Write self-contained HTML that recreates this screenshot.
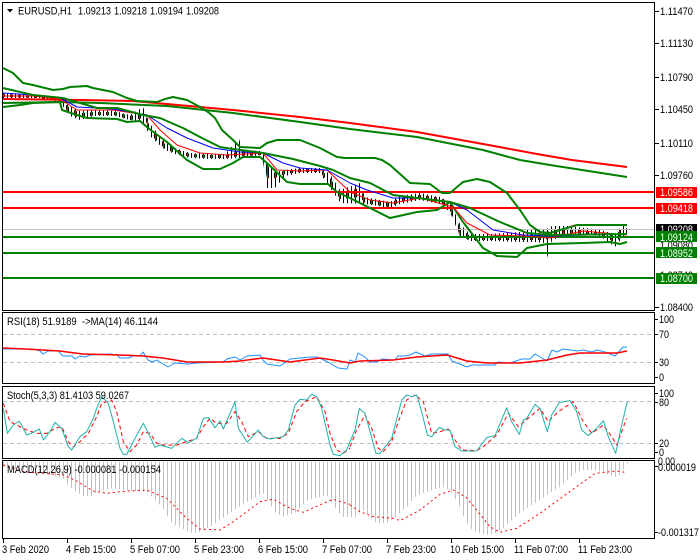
<!DOCTYPE html>
<html><head><meta charset="utf-8"><title>EURUSD,H1</title>
<style>
html,body{margin:0;padding:0;background:#fff}
svg{display:block}
text{font:11px "Liberation Sans",sans-serif;fill:#000}
.w{fill:#fff}
polyline{fill:none;stroke-linejoin:round}
.z polyline{vector-effect:non-scaling-stroke}
</style></head><body>
<svg width="700" height="560" viewBox="0 0 700 560" xmlns="http://www.w3.org/2000/svg">
<defs>
<pattern id="bar" width="4" height="600" patternUnits="userSpaceOnUse"><rect x="3" width="1" height="600" fill="#c0c0c0"/></pattern>
<pattern id="wick" width="4" height="600" patternUnits="userSpaceOnUse"><rect x="3" width="1" height="600" fill="#000"/></pattern>
<pattern id="body" width="8" height="600" patternUnits="userSpaceOnUse"><rect x="2" width="3" height="600" fill="#000"/><rect x="3" width="1" height="600" fill="#f00"/></pattern>
</defs>
<rect width="700" height="560" fill="#fff"/>

<!-- candles -->
<polygon fill="url(#wick)" points="3,93 40,95 60,100 70,106 80,111 95,110 115,111 130,115 143,107 150,124 165,142 175,148 190,153 210,154 225,154 239,139 243,150 262,151 267,162 275,172 285,170 300,168 320,168 330,174 340,190 360,183 365,197 390,202 400,196 420,193 440,197 450,202 460,224 470,234 490,234 520,232 535,228 545,230 552,226 570,226 600,230 615,234 622,226 627,226 627,236 622,238 615,247 600,236 570,234 552,240 547,258 545,243 535,242 520,242 490,241 470,241 460,236 450,212 440,204 420,200 400,204 390,208 365,204 343,203 340,202 330,188 320,173 300,173 285,176 275,188 267,188 262,155 240,158 225,159 210,159 190,158 175,154 165,150 150,136 143,122 130,120 115,116 95,116 80,120 70,116 60,102 40,98 3,98"/>
<polygon fill="url(#body)" points="3,94 40,96 60,100 70,108 80,113 95,112 115,112 130,116 145,113 150,128 165,144 175,149 190,154 210,155 225,155 240,151 262,152 267,165 275,173 285,171 300,169 320,169 330,178 340,193 360,188 365,199 390,203 400,198 420,195 440,198 450,203 460,228 470,236 490,236 520,236 535,234 545,234 552,229 570,229 600,232 615,236 622,228 627,228 627,233 622,237 615,242 600,235 570,233 552,236 545,240 535,240 520,240 490,240 470,240 460,236 450,210 440,202 420,199 400,202 390,207 365,203 360,197 340,199 330,184 320,172 300,172 285,174 275,178 267,178 262,155 240,156 225,158 210,158 190,157 175,153 165,149 150,134 145,118 130,120 115,115 95,115 80,118 70,114 60,102 40,98 3,97"/>

<!-- horizontal levels -->
<rect x="3" y="229" width="651" height="1" fill="#c0c0c0"/>
<rect x="3" y="191" width="651" height="2" fill="#f00"/>
<rect x="3" y="207" width="651" height="2" fill="#f00"/>
<rect x="3" y="236" width="651" height="2" fill="#008000"/>
<rect x="3" y="252" width="651" height="2" fill="#008000"/>
<rect x="3" y="277" width="651" height="2" fill="#008000"/>

<!-- moving averages and bands -->
<polyline stroke="#008000" stroke-width="2" points="3,103 60,102 100,103 167,106 233,113 300,122 350,129 417,137 483,150 520,160 550,165 627,177"/>
<polyline stroke="#f00" stroke-width="2" points="3,99 83,100 133,101 167,104 233,110 300,117 350,123 417,132 483,144 537,154 572,160 627,167"/>
<polyline stroke="#008000" stroke-width="2" points="3,68 13,73 23,83 33,85 53,90 63,89 70,87 87,86 93,88 113,92 127,98 137,101 157,102 165,99 173,97 187,100 200,107 208,112 215,118 222,130 233,140 240,147 260,148 267,143 277,140 300,140 320,148 337,157 345,158 375,158 382,160 390,165 410,183 430,184 442,193 450,193 463,182 477,179 490,182 507,193 520,210 530,225 540,232 550,233 567,228 577,225 627,225"/>
<polyline stroke="#008000" stroke-width="2" points="3,107 20,105 33,103 60,102 62,110 77,115 87,118 117,119 127,122 140,121 148,128 167,142 187,160 203,169 220,169 233,163 243,157 260,157 267,163 287,182 300,184 328,184 337,192 350,198 390,218 417,212 437,210 450,202 463,222 483,248 497,256 517,257 527,248 547,244 583,243 610,242 620,244 627,242"/>
<polyline stroke="#f00" stroke-width="1" points="3,96 33,96 60,99 77,110 113,110 147,115 160,130 177,145 200,153 227,155 263,153 277,170 300,171 327,170 350,192 370,200 393,203 420,198 453,207 467,223 490,235 523,236 550,238 583,231 627,235"/>
<polyline stroke="#00f" stroke-width="1" points="3,93 33,95 60,98 77,107 113,109 147,115 167,128 187,138 213,148 240,152 263,153 283,163 300,168 327,170 350,183 367,190 393,198 420,198 450,202 467,210 493,230 523,235 550,236 627,234"/>
<polyline stroke="#008000" stroke-width="2" points="3,88 33,95 63,98 97,108 117,108 143,115 160,118 183,128 200,137 220,147 233,149 263,153 293,159 320,166 333,170 350,178 370,183 393,195 417,198 450,202 470,208 500,222 527,233 550,235 627,234"/>

<!-- RSI -->
<line x1="3" x2="654" y1="334.5" y2="334.5" stroke="#c0c0c0" stroke-dasharray="4 3"/>
<line x1="3" x2="654" y1="362.5" y2="362.5" stroke="#c0c0c0" stroke-dasharray="4 3"/>
<polyline stroke="#1e90ff" points="3,349 33,349 40,351 43,354 48,351 58,351 63,356 72,356 75,359 80,356 85,357 90,355 110,354 117,355 120,358 128,358 133,356 140,356 143,352 148,360 152,362 157,360 163,364 168,367 175,363 187,364 197,363 223,362 227,359 235,357 240,360 247,356 260,355 263,360 267,364 280,366 290,359 300,358 310,357 317,357 328,362 338,368 347,369 350,360 355,362 358,353 365,357 370,362 377,362 382,359 395,360 398,356 405,356 410,355 416,352 425,356 432,354 448,354 452,361 467,367 472,365 495,365 498,362 510,363 522,359 530,359 535,354 547,361 552,350 557,352 563,349 577,351 583,350 592,352 597,350 605,352 615,356 623,347 627,347"/>
<polyline stroke="#f00" stroke-width="1.5" points="3,348 25,349 60,351 67,352 83,354 120,355 143,356 163,358 187,362 223,362 240,361 263,358 290,362 320,358 333,360 350,363 360,361 393,360 417,357 447,355 467,361 487,363 520,363 547,360 567,355 580,353 610,353 617,353 627,351"/>

<!-- Stochastic -->
<line x1="3" x2="654" y1="401.5" y2="401.5" stroke="#c0c0c0" stroke-dasharray="4 3"/>
<line x1="3" x2="654" y1="443.5" y2="443.5" stroke="#c0c0c0" stroke-dasharray="4 3"/>
<g class="z" transform="translate(0,305) scale(.33333)">
<polyline stroke="#f00" stroke-dasharray="4 3" points="10,295 30,350 50,360 80,375 110,385 140,385 165,370 185,365 205,410 220,425 240,410 265,385 290,335 305,295 335,285 350,320 370,410 390,440 410,420 430,380 450,385 470,415 490,420 530,420 560,410 590,400 610,365 630,340 650,355 680,355 705,320 725,350 745,395 775,380 800,400 840,400 865,385 890,320 915,290 950,275 975,320 990,385 1010,435 1030,445 1050,430"/>
<polyline stroke="#20b2aa" points="10,310 22,385 40,360 58,348 80,390 100,382 118,372 130,405 150,380 165,352 185,370 205,425 215,435 240,395 260,380 280,340 290,310 305,275 325,295 340,350 360,430 370,448 380,448 405,400 430,355 450,395 465,427 480,420 515,430 545,400 565,413 590,400 610,340 625,338 645,368 660,348 670,372 705,290 715,370 742,412 775,375 790,395 810,402 850,395 865,375 885,300 900,283 920,285 935,268 950,275 965,310 990,420 1000,448 1020,452 1040,435 1050,410"/>
</g>
<g class="z" transform="translate(350,305) scale(.33333)">
<polyline stroke="#f00" stroke-dasharray="4 3" points="0,425 20,375 45,330 65,370 85,430 100,440 125,410 145,350 170,285 195,270 220,290 245,385 270,380 295,372 315,405 335,435 380,437 400,425 440,390 475,325 505,365 540,335 570,310 595,350 625,320 670,290 700,350 725,385 760,360 785,395 800,420 830,340"/>
<polyline stroke="#20b2aa" points="0,410 15,375 28,310 45,325 60,380 78,445 90,445 125,400 155,285 170,270 185,275 200,270 215,320 232,390 245,395 268,367 285,375 300,375 315,425 335,438 380,438 410,398 435,392 470,308 485,350 508,388 520,345 530,340 555,298 570,310 592,380 605,330 628,292 660,287 680,320 695,375 715,392 740,370 760,347 775,395 797,445 815,360 832,290"/>
</g>

<!-- MACD -->
<polygon fill="url(#bar)" points="3,467 43,473 63,478 68,485 75,491 83,496 92,496 97,492 113,488 123,490 147,492 155,500 163,508 168,517 173,524 183,529 192,533 200,532 213,525 230,513 247,502 263,493 275,512 283,517 295,513 308,500 327,495 338,512 343,517 350,517 355,518 360,512 363,510 375,522 380,523 387,523 395,518 403,510 407,507 415,497 423,493 432,490 445,487 452,493 460,507 463,515 467,523 472,530 479,533 487,535 497,533 503,528 512,520 520,513 532,505 540,500 550,493 560,487 567,480 575,473 583,470 595,470 615,477 620,475 625,467 628,463 628,462 3,462"/>
<g class="z" transform="translate(0,455) scale(.33333)">
<polyline stroke="#f00" stroke-dasharray="2 3" points="10,30 70,50 190,60 230,78 280,108 320,115 380,108 440,105 500,130 560,190 600,222 660,225 700,200 780,140 820,133 870,160 910,172 970,145 1000,133 1050,148"/>
</g>
<g class="z" transform="translate(350,455) scale(.33333)">
<polyline stroke="#f00" stroke-dasharray="2 3" points="0,150 30,170 70,185 130,190 150,197 210,165 270,118 310,105 350,128 420,215 450,232 500,220 570,175 680,95 735,55 800,48 825,52"/>
</g>

<!-- frames -->
<g fill="none" stroke="#000">
<rect x="2.5" y="2.5" width="652" height="308"/>
<rect x="2.5" y="312.5" width="652" height="71"/>
<rect x="2.5" y="386.5" width="652" height="72"/>
<rect x="2.5" y="460.5" width="652" height="78"/>
<path d="M654 11.5h5M654 43.5h5M654 77.5h5M654 109.5h5M654 143.5h5M654 175.5h5M654 307.5h5M654 319.5h4M654 334.5h4M654 362.5h4M654 377.5h4M654 393.5h4M654 402.5h4M654 443.5h4M654 452.5h4M654 466.5h4M654 532.5h4"/>
<path d="M3.5 539v4M67.5 539v4M131.5 539v4M195.5 539v4M259.5 539v4M323.5 539v4M387.5 539v4M451.5 539v4M515.5 539v4M579.5 539v4"/>
</g>

<!-- right axis -->
<g>
<text x="660" y="15" textLength="33" lengthAdjust="spacingAndGlyphs">1.11470</text>
<text x="660" y="47" textLength="33" lengthAdjust="spacingAndGlyphs">1.11130</text>
<text x="660" y="81" textLength="33" lengthAdjust="spacingAndGlyphs">1.10790</text>
<text x="660" y="113" textLength="33" lengthAdjust="spacingAndGlyphs">1.10450</text>
<text x="660" y="147" textLength="33" lengthAdjust="spacingAndGlyphs">1.10110</text>
<text x="660" y="179" textLength="33" lengthAdjust="spacingAndGlyphs">1.09760</text>
<text x="660" y="249" textLength="33" lengthAdjust="spacingAndGlyphs">1.09080</text>
<text x="660" y="279" textLength="33" lengthAdjust="spacingAndGlyphs">1.08740</text>
<text x="660" y="311" textLength="33" lengthAdjust="spacingAndGlyphs">1.08400</text>
</g>
<rect x="656" y="187" width="41" height="11" fill="#f00"/>
<rect x="656" y="203" width="41" height="11" fill="#f00"/>
<rect x="656" y="224" width="41" height="11" fill="#000"/>
<text class="w" x="660" y="233" textLength="33" lengthAdjust="spacingAndGlyphs">1.09208</text>
<rect x="656" y="231" width="41" height="11" fill="#008000"/>
<rect x="656" y="247" width="41" height="11" fill="#008000"/>
<rect x="656" y="273" width="41" height="11" fill="#008000"/>
<text class="w" x="660" y="196" textLength="33" lengthAdjust="spacingAndGlyphs">1.09586</text>
<text class="w" x="660" y="212" textLength="33" lengthAdjust="spacingAndGlyphs">1.09418</text>
<text class="w" x="660" y="241" textLength="33" lengthAdjust="spacingAndGlyphs">1.09124</text>
<text class="w" x="660" y="257" textLength="33" lengthAdjust="spacingAndGlyphs">1.08952</text>
<text class="w" x="660" y="282" textLength="33" lengthAdjust="spacingAndGlyphs">1.08700</text>

<text x="659" y="323" textLength="15" lengthAdjust="spacingAndGlyphs">100</text>
<text x="659" y="338" textLength="10" lengthAdjust="spacingAndGlyphs">70</text>
<text x="659" y="366" textLength="10" lengthAdjust="spacingAndGlyphs">30</text>
<text x="659" y="381" textLength="5" lengthAdjust="spacingAndGlyphs">0</text>
<text x="659" y="397" textLength="15" lengthAdjust="spacingAndGlyphs">100</text>
<text x="659" y="406" textLength="10" lengthAdjust="spacingAndGlyphs">80</text>
<text x="659" y="447" textLength="10" lengthAdjust="spacingAndGlyphs">20</text>
<text x="659" y="456" textLength="5" lengthAdjust="spacingAndGlyphs">0</text>
<text x="658" y="465" textLength="17" lengthAdjust="spacingAndGlyphs">0.00</text>
<text x="658" y="471" textLength="38" lengthAdjust="spacingAndGlyphs">0.000019</text>
<text x="658" y="536" textLength="41" lengthAdjust="spacingAndGlyphs">-0.001317</text>

<!-- bottom axis -->
<text x="2" y="553" textLength="47" lengthAdjust="spacingAndGlyphs">3 Feb 2020</text>
<text x="66" y="553" textLength="50" lengthAdjust="spacingAndGlyphs">4 Feb 15:00</text>
<text x="130" y="553" textLength="50" lengthAdjust="spacingAndGlyphs">5 Feb 07:00</text>
<text x="194" y="553" textLength="50" lengthAdjust="spacingAndGlyphs">5 Feb 23:00</text>
<text x="258" y="553" textLength="50" lengthAdjust="spacingAndGlyphs">6 Feb 15:00</text>
<text x="322" y="553" textLength="50" lengthAdjust="spacingAndGlyphs">7 Feb 07:00</text>
<text x="386" y="553" textLength="50" lengthAdjust="spacingAndGlyphs">7 Feb 23:00</text>
<text x="450" y="553" textLength="54" lengthAdjust="spacingAndGlyphs">10 Feb 15:00</text>
<text x="514" y="553" textLength="54" lengthAdjust="spacingAndGlyphs">11 Feb 07:00</text>
<text x="578" y="553" textLength="54" lengthAdjust="spacingAndGlyphs">11 Feb 23:00</text>

<!-- titles -->
<polygon points="7,9 13,9 10,12.500" fill="#000"/>
<text x="18" y="14.500" textLength="54" lengthAdjust="spacingAndGlyphs">EURUSD,H1</text>
<text x="78" y="14.500" textLength="33" lengthAdjust="spacingAndGlyphs">1.09213</text>
<text x="114" y="14.500" textLength="33" lengthAdjust="spacingAndGlyphs">1.09218</text>
<text x="150" y="14.500" textLength="33" lengthAdjust="spacingAndGlyphs">1.09194</text>
<text x="186" y="14.500" textLength="33" lengthAdjust="spacingAndGlyphs">1.09208</text>
<text x="7" y="325" textLength="151" lengthAdjust="spacingAndGlyphs" xml:space="preserve">RSI(18) 51.9189  -&gt;MA(14) 46.1144</text>
<text x="7" y="399" textLength="122" lengthAdjust="spacingAndGlyphs">Stoch(5,3,3) 81.4103 59.0267</text>
<text x="7" y="473" textLength="154" lengthAdjust="spacingAndGlyphs">MACD(12,26,9) -0.000081 -0.000154</text>
</svg>
</body></html>
